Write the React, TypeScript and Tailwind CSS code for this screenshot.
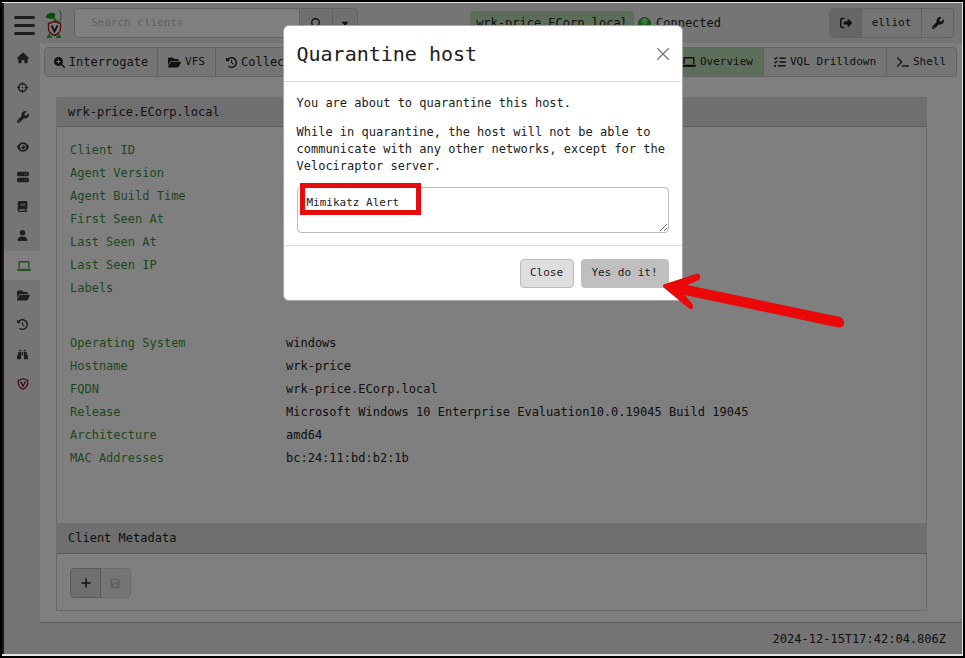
import type { ReactNode } from 'react';
import {
  FaHouse,
  FaCrosshairs,
  FaWrench,
  FaEye,
  FaServer,
  FaBook,
  FaUser,
  FaLaptop,
  FaFolderOpen,
  FaClockRotateLeft,
  FaBinoculars,
  FaMagnifyingGlass,
  FaMagnifyingGlassPlus,
  FaCaretDown,
  FaRightFromBracket,
  FaListCheck,
  FaTerminal,
  FaFloppyDisk,
} from 'react-icons/fa6';

function ShieldIcon() {
  return (
    <svg viewBox="0 0 24 24" className="h-3 w-3" fill="none" stroke="#b00838" strokeWidth="2.6">
      <path d="M12 1.5 2.5 4.5v5c0 6 3.500 10 9.500 13 6-3 9.500-7 9.500-13v-5z" />
      <path d="m7 7 5 9 5-9" stroke="#5c2030" strokeWidth="3" />
    </svg>
  );
}

function PlusIcon() {
  return (
    <svg viewBox="0 0 10 10" className="h-[10px] w-[10px]" fill="none" stroke="currentColor" strokeWidth="1.5" strokeLinecap="round">
      <path d="M5 1v8M1 5h8" />
    </svg>
  );
}

function Logo() {
  return (
    <svg viewBox="0 0 18 29" className="h-[29px] w-[18px]" fill="none">
      <path d="M14 1c3 4 3 8 0 12l-3-2" stroke="#1ca02c" strokeWidth="1" />
      <path d="M1 7c1-2 3-3 5-3 3-1 5 1 4 4-1 2-4 2-6 1.500C2 9 0 9 1 7z" fill="#0c9c0c" />
      <path d="m8 8 3 4M5 25l-2 3M13 25l2 3M2 28h5m4 0h5" stroke="#0ca81c" strokeWidth="1.600" />
      <path d="M9.500 12.500 3.500 14.500v5c0 3 2.500 5.500 6 7 3.500-1.500 6-4 6-7v-5z" fill="#f4f4f4" stroke="#b01818" strokeWidth="1.400" />
      <path d="m6.500 16.500 3 6 3-6" stroke="#222" strokeWidth="1.800" />
    </svg>
  );
}

const navItems: { label: string; icon: ReactNode; active?: boolean }[] = [
  { label: 'Home', icon: <FaHouse /> },
  { label: 'Hunts', icon: <FaCrosshairs className="h-[11px] w-[11px]" /> },
  { label: 'Artifacts', icon: <FaWrench /> },
  { label: 'Events', icon: <FaEye /> },
  { label: 'Server', icon: <FaServer /> },
  { label: 'Notebooks', icon: <FaBook className="h-[11px] w-[11px]" /> },
  { label: 'Users', icon: <FaUser className="h-[11px] w-[11px]" /> },
  { label: 'Host', icon: <FaLaptop className="h-[14px] w-[14px]" />, active: true },
  { label: 'Files', icon: <FaFolderOpen className="h-[13px] w-[13px]" /> },
  { label: 'Collections', icon: <FaClockRotateLeft className="h-[11px] w-[11px]" /> },
  { label: 'Client events', icon: <FaBinoculars className="h-[11px] w-[11px]" /> },
  { label: 'About', icon: <ShieldIcon /> },
];

const agentRows = ['Client ID', 'Agent Version', 'Agent Build Time', 'First Seen At', 'Last Seen At', 'Last Seen IP', 'Labels'];

const hostRows = [
  ['Operating System', 'windows'],
  ['Hostname', 'wrk-price'],
  ['FQDN', 'wrk-price.ECorp.local'],
  ['Release', 'Microsoft Windows 10 Enterprise Evaluation10.0.19045 Build 19045'],
  ['Architecture', 'amd64'],
  ['MAC Addresses', 'bc:24:11:bd:b2:1b'],
];

const group = 'flex h-[30px] overflow-hidden rounded border border-[#c4c4c4] bg-[#ebebeb]';
const groupButton = 'flex items-center justify-center gap-1 whitespace-nowrap';

function Header() {
  return (
    <header className="flex h-10 items-center bg-[#ebebeb] pr-2">
      <button aria-label="Toggle menu" className="ml-[10px] flex w-[21px] flex-col gap-[5px] pt-1">
        <span className="h-[3px] w-full rounded bg-[#3c3c3c]" />
        <span className="h-[3px] w-full rounded bg-[#3c3c3c]" />
        <span className="h-[3px] w-full rounded bg-[#3c3c3c]" />
      </button>
      <div className="ml-[10px] w-[29px]">
        <Logo />
      </div>
      <form className="flex h-[30px] w-[284px]">
        <input
          aria-label="Search clients"
          placeholder="Search clients"
          className="w-[226px] rounded-l border border-[#c4c4c4] bg-white px-4 text-[11px] placeholder:text-[#c4c4c4]"
        />
        <button type="button" aria-label="Search" className="flex w-8 items-center justify-center border-y border-[#c4c4c4] bg-[#dedede]">
          <FaMagnifyingGlass className="h-[11px] w-[11px]" />
        </button>
        <button
          type="button"
          aria-label="Search options"
          className="flex flex-1 items-center justify-center rounded-r border border-[#c4c4c4] bg-[#dedede]"
        >
          <FaCaretDown className="h-[10px] w-[10px]" />
        </button>
      </form>
      <div className="flex flex-1 items-center justify-center pl-1">
        <button className="h-6 w-[164px] rounded-sm bg-[#b9dcb4]">wrk-price.ECorp.local</button>
        <span className="ml-1 h-[13px] w-[13px] rounded-full border border-[#158a15] bg-radial-[at_50%_20%] from-[#b8f4b8] to-[#24b924] to-60%" />
        <span className="ml-[5px]">Connected</span>
      </div>
      <div className={group}>
        <button aria-label="Log out" className={groupButton + ' w-8 bg-[#cccccc]'}>
          <FaRightFromBracket className="h-3 w-3" />
        </button>
        <button className={groupButton + ' w-[60px] border-r border-[#c4c4c4] text-[11px]'}>elliot</button>
        <button aria-label="Settings" className={groupButton + ' w-[31px]'}>
          <FaWrench className="h-3 w-3" />
        </button>
      </div>
    </header>
  );
}

function Sidebar() {
  return (
    <nav className="w-9 shrink-0 bg-[#ebebeb]">
      <ul className="flex h-[356px] flex-col">
        {navItems.map((item) => (
          <li key={item.label} className="flex flex-1">
            <a
              href="#"
              aria-label={item.label}
              className={
                'flex w-full items-center pl-[13px] text-[12px] ' + (item.active ? 'bg-white text-[#4a9a4a]' : 'text-[#3c3c3c]')
              }
            >
              {item.icon}
            </a>
          </li>
        ))}
      </ul>
    </nav>
  );
}

function Toolbar() {
  return (
    <div className="flex justify-between pr-[5px] pl-1">
      <div className={group}>
        <button className={groupButton + ' w-[113px] border-r border-[#c4c4c4] text-[12px]'}>
          <FaMagnifyingGlassPlus className="h-[11px] w-[11px]" />
          Interrogate
        </button>
        <button className={groupButton + ' w-[58px] border-r border-[#c4c4c4] text-[11px]'}>
          <FaFolderOpen className="h-[13px] w-[13px]" />
          VFS
        </button>
        <button className={groupButton + ' w-[100px] text-[12px]'}>
          <FaClockRotateLeft className="h-[11px] w-[11px]" />
          Collected
        </button>
      </div>
      <div className={group}>
        <button className={groupButton + ' w-[92px] border-r border-[#c4c4c4] bg-[#b9dcb4] text-[11px]'}>
          <FaLaptop className="h-[14px] w-[14px]" />
          Overview
        </button>
        <button className={groupButton + ' w-[123px] border-r border-[#c4c4c4] text-[11px]'}>
          <FaListCheck className="h-3 w-3" />
          VQL Drilldown
        </button>
        <button className={groupButton + ' w-[69px] text-[11px]'}>
          <FaTerminal className="h-3 w-3" />
          Shell
        </button>
      </div>
    </div>
  );
}

function HostCard() {
  return (
    <section className="mt-5 mr-[35px] ml-4 border border-t-0 border-[#d4d4d4]">
      <h2 className="-mx-px flex h-[30px] items-center rounded-t border-b border-[#b8b8b8] bg-[#dedede] px-3">
        wrk-price.ECorp.local
      </h2>
      <dl className="px-[13px] pt-[11px] pb-[54px]">
        {agentRows.map((label) => (
          <div key={label} className="flex h-[23px] items-center">
            <dt className="w-[216px] text-[#3f8f3f]">{label}</dt>
            <dd />
          </div>
        ))}
        <div className="h-8" />
        {hostRows.map(([label, value]) => (
          <div key={label} className="flex h-[23px] items-center">
            <dt className="w-[216px] text-[#3f8f3f]">{label}</dt>
            <dd>{value}</dd>
          </div>
        ))}
      </dl>
      <h2 className="-mx-px flex h-[31px] items-center border-b border-[#b0b0b0] bg-[#dedede] px-3">Client Metadata</h2>
      <div className="flex px-[13px] pt-[14px] pb-3">
        <button
          aria-label="Add metadata"
          className="flex h-[30px] w-[31px] items-center justify-center rounded-l border border-[#b4b4b4] bg-[#dedede]"
        >
          <PlusIcon />
        </button>
        <button
          aria-label="Save metadata"
          disabled
          className="flex h-[30px] w-[30px] items-center justify-center rounded-r border border-l-0 border-[#d8d8d8] bg-[#ebebeb] text-[#c4c4c4]"
        >
          <FaFloppyDisk className="h-[11px] w-[11px]" />
        </button>
      </div>
    </section>
  );
}

function QuarantineDialog() {
  return (
    <div
      role="dialog"
      aria-labelledby="quarantine-title"
      className="absolute top-[25px] left-1/2 w-[400px] -translate-x-1/2 rounded-md border border-[#a8a8a8] bg-white text-[#212121]"
    >
      <div className="flex h-14 items-center justify-between border-b border-[#dedede] px-[13px]">
        <h1 id="quarantine-title" className="text-[20px]">
          Quarantine host
        </h1>
        <button aria-label="Close dialog">
          <svg viewBox="0 0 12 12" className="h-3 w-3" stroke="#777" strokeWidth="1.3">
            <path d="m0 0 12 12M12 0 0 12" />
          </svg>
        </button>
      </div>
      <div className="px-[13px] pt-[13px] pb-3 leading-4">
        <p>You are about to quarantine this host.</p>
        <label htmlFor="quarantine-message" className="mt-[13px] block leading-[17px]">
          While in quarantine, the host will not be able to communicate with any other networks, except for the Velociraptor server.
        </label>
        <div className="relative mt-3">
          <textarea
            id="quarantine-message"
            defaultValue="Mimikatz Alert"
            className="block h-[46px] w-full rounded border border-[#bcbcbc] px-[9px] py-[7px] text-[11px] leading-4"
          />
          <span className="absolute -top-1 left-[3px] h-8 w-[121px] border-[5px] border-[#e60c0c]" />
        </div>
      </div>
      <div className="flex justify-end gap-[7px] border-t border-[#dedede] px-[13px] pt-[13px] pb-3 text-[11px]">
        <button className="h-[29px] w-[54px] rounded border border-[#bcbcbc] bg-[#dedede]">Close</button>
        <button className="h-[29px] w-[88px] rounded bg-[#bfbfbf]">Yes do it!</button>
      </div>
      <svg viewBox="0 0 182 56" className="absolute top-[247px] left-[379px] h-14 w-[182px]" fill="#ea0808">
        <path d="M0 14Q-1 12 2 11L33 1Q38 0 37 5L36 7 24 12 177 44Q182 46 181 51 179 56 173 54L22 22 30 32Q31 36 27 36L23 33Z" />
      </svg>
    </div>
  );
}

export default function App() {
  return (
    <div className="relative flex min-h-screen flex-col border-2 border-black bg-black font-['DejaVu_Sans_Mono','Liberation_Mono',monospace] text-[12px] text-[#212121]">
      <div className="flex flex-1 flex-col border-t border-r border-b-2 border-[#e4e4e4]">
        <div className="relative flex flex-1 flex-col border-l-2 border-[#241414] bg-white">
          <Header />
          <div className="flex flex-1">
            <Sidebar />
            <main className="flex min-w-0 flex-1 flex-col">
              <div className="flex-1 pt-1 pb-[11px]">
                <Toolbar />
                <HostCard />
              </div>
              <footer className="flex h-8 items-center justify-end border-t border-[#bcbcbc] bg-[#ebebeb] pr-4">
                2024-12-15T17:42:04.806Z
              </footer>
            </main>
          </div>
          <div className="absolute inset-0 bg-black/50" />
        </div>
      </div>
      <div className="absolute inset-x-0 -top-[2px]">
        <QuarantineDialog />
      </div>
    </div>
  );
}
